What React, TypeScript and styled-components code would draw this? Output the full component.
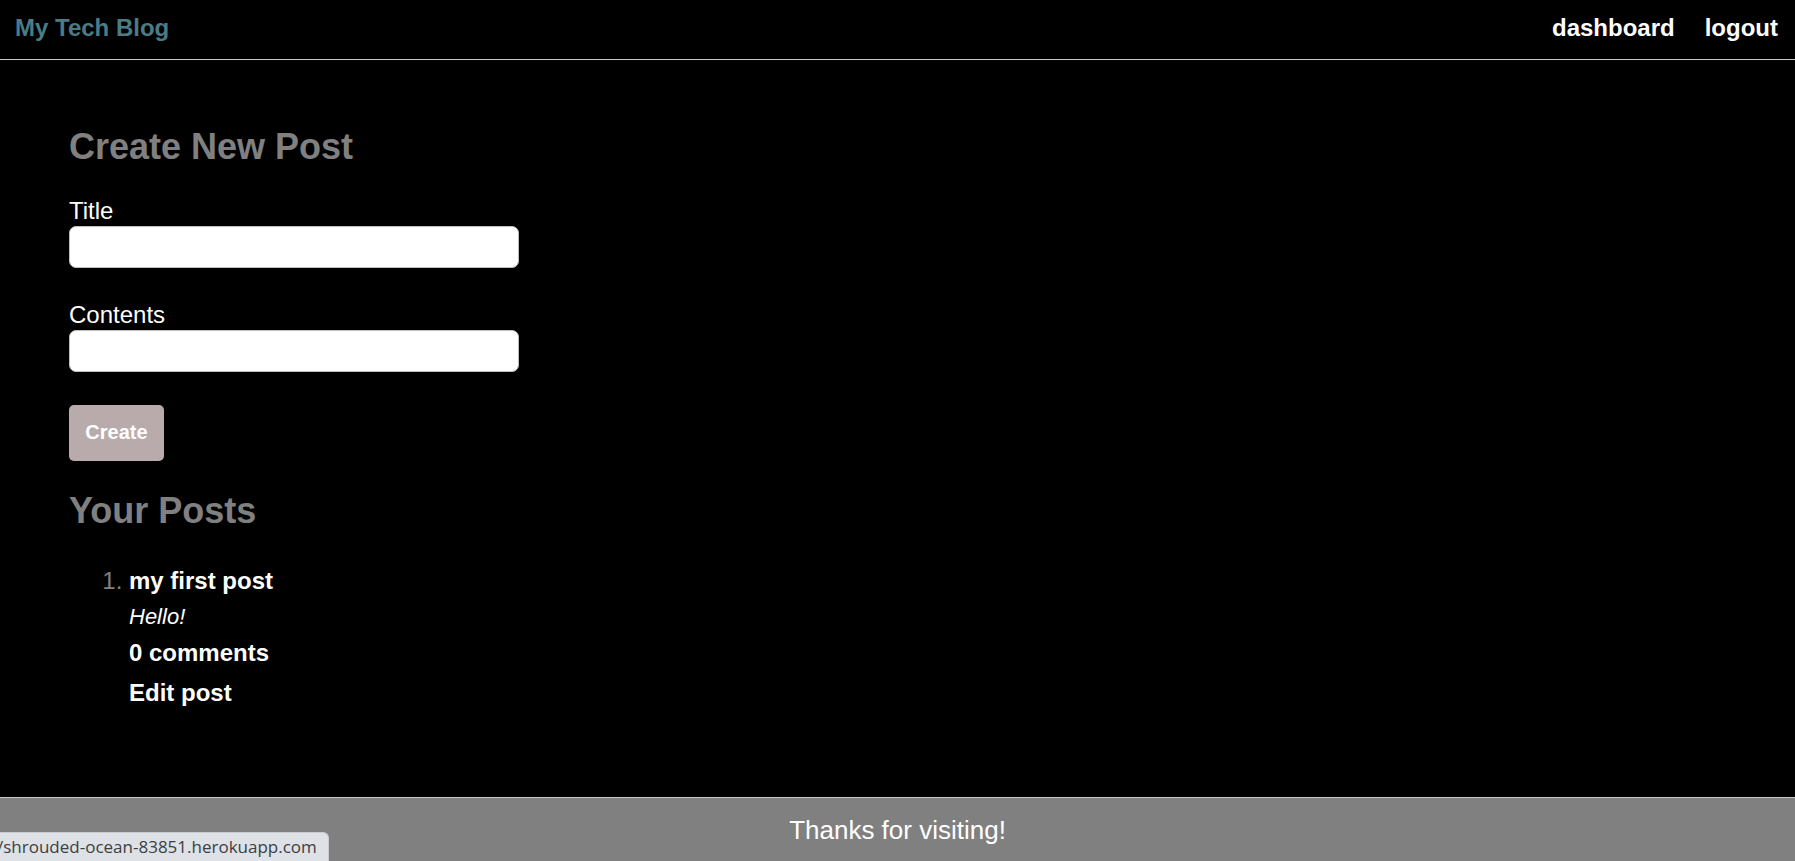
import React from "react";
import styled, { createGlobalStyle } from "styled-components";

const GlobalStyle = createGlobalStyle`
  html, body {
    margin: 0;
    padding: 0;
    background: #000;
  }
  body {
    font-family: "Liberation Sans", Arial, sans-serif;
    color: #fff;
  }
  * { box-sizing: border-box; }
`;

const Page = styled.div`
  min-height: 100vh;
  display: flex;
  flex-direction: column;
  background: #000;
`;

const Header = styled.header`
  height: 60px;
  display: flex;
  align-items: flex-start;
  justify-content: space-between;
  padding: 14px 17px 0 15px;
  border-bottom: 1px solid #c8c8c8;
`;

const Brand = styled.a`
  font-size: 24px;
  line-height: 27px;
  font-weight: 700;
  color: #4a7c86;
  text-decoration: none;
`;

const Nav = styled.nav`
  display: flex;
  gap: 30px;
`;

const NavLink = styled.a`
  font-size: 24px;
  line-height: 27px;
  font-weight: 700;
  color: #fff;
  text-decoration: none;
`;

const Main = styled.main`
  flex: 1;
  padding: 66px 69px 40px;
`;

const SectionTitle = styled.h2<{ $gap?: number }>`
  margin: ${(p) => p.$gap ?? 0}px 0 0;
  font-size: 36px;
  line-height: 42px;
  font-weight: 700;
  color: #808080;
`;

const Form = styled.form`
  display: flex;
  flex-direction: column;
  align-items: flex-start;
`;

const Field = styled.div<{ $gap: number }>`
  display: flex;
  flex-direction: column;
  margin-top: ${(p) => p.$gap}px;
`;

const Label = styled.label`
  font-size: 24px;
  line-height: 26px;
  color: #fff;
  margin-bottom: 2px;
`;

const Input = styled.input`
  width: 450px;
  height: 42px;
  border: 1px solid #bdbdbd;
  border-radius: 7px;
  background: #fff;
  font-size: 18px;
  padding: 0 10px;
  outline: none;
`;

const Button = styled.button`
  margin-top: 33px;
  width: 95px;
  height: 56px;
  border: none;
  border-radius: 5px;
  background: #b9abab;
  color: #fff;
  font-family: "Liberation Sans", Arial, sans-serif;
  font-size: 20px;
  line-height: 23px;
  font-weight: 700;
  display: flex;
  align-items: center;
  justify-content: center;
  padding: 0 0 2px;
  cursor: pointer;
`;

const PostList = styled.ol`
  margin: 35px 0 0;
  padding-left: 60px;
`;

const PostItem = styled.li`
  font-size: 24px;
  line-height: 28px;
  color: #808080;
  &::marker {
    color: #808080;
    font-weight: 400;
  }
`;

const PostLink = styled.a<{ $gap?: number }>`
  display: block;
  width: fit-content;
  margin-top: ${(p) => p.$gap ?? 0}px;
  font-size: 24px;
  line-height: 28px;
  font-weight: 700;
  color: #fff;
  text-decoration: none;
`;

const PostBody = styled.p`
  margin: 9px 0 0;
  font-size: 22px;
  line-height: 26px;
  font-style: italic;
  color: #fff;
`;

const Footer = styled.footer`
  height: 64px;
  border-top: 1px solid #c8c8c8;
  background: #808080;
  padding-top: 17px;
  text-align: center;
  font-size: 26px;
  line-height: 30px;
  color: #fff;
`;

const StatusBubble = styled.div`
  position: fixed;
  left: 0;
  bottom: 0;
  width: 329px;
  height: 29px;
  background: #dee1e6;
  border-top: 1px solid #c9ccd1;
  border-right: 1px solid #c9ccd1;
  border-top-right-radius: 6px;
  overflow: hidden;
  white-space: nowrap;
  font-family: "Open Sans", "Noto Sans", sans-serif;
  font-size: 17px;
  line-height: 27px;
  color: #3c4043;
  text-indent: -3px;
`;

export default function App() {
  return (
    <>
      <GlobalStyle />
      <Page>
        <Header>
          <Brand href="#">My Tech Blog</Brand>
          <Nav>
            <NavLink href="#">dashboard</NavLink>
            <NavLink href="#">logout</NavLink>
          </Nav>
        </Header>
        <Main>
          <SectionTitle>Create New Post</SectionTitle>
          <Form onSubmit={(e) => e.preventDefault()}>
            <Field $gap={30}>
              <Label htmlFor="title">Title</Label>
              <Input id="title" type="text" />
            </Field>
            <Field $gap={34}>
              <Label htmlFor="contents">Contents</Label>
              <Input id="contents" type="text" />
            </Field>
            <Button type="submit">Create</Button>
          </Form>
          <SectionTitle $gap={29}>Your Posts</SectionTitle>
          <PostList>
            <PostItem>
              <PostLink href="#">my first post</PostLink>
              <PostBody>Hello!</PostBody>
              <PostLink href="#" $gap={9}>0 comments</PostLink>
              <PostLink href="#" $gap={12}>Edit post</PostLink>
            </PostItem>
          </PostList>
        </Main>
        <Footer>Thanks for visiting!</Footer>
      </Page>
      <StatusBubble>/shrouded-ocean-83851.herokuapp.com</StatusBubble>
    </>
  );
}
